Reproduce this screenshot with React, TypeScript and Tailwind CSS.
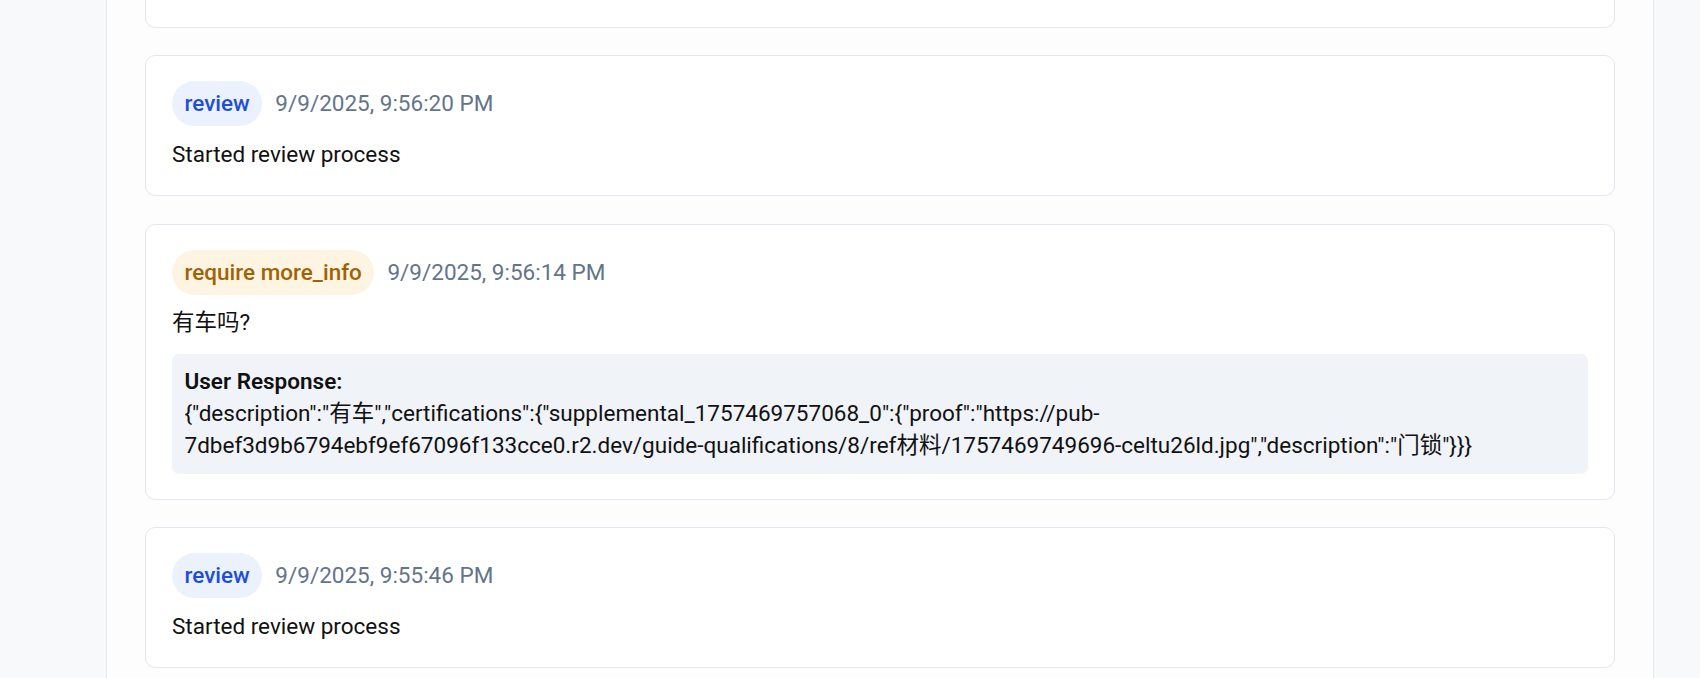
import React from 'react';

type Entry = {
    action: string;
    tone: 'blue' | 'amber';
    time: string;
    note: string;
    response?: string;
};

const entries: Entry[] = [
    { action: 'review', tone: 'blue', time: '9/9/2025, 9:56:31 PM', note: 'Started review process' },
    { action: 'review', tone: 'blue', time: '9/9/2025, 9:56:20 PM', note: 'Started review process' },
    {
        action: 'require more_info',
        tone: 'amber',
        time: '9/9/2025, 9:56:14 PM',
        note: '有车吗?',
        response:
            '{"description":"有车","certifications":{"supplemental_1757469757068_0":{"proof":"https://pub-7dbef3d9b6794ebf9ef67096f133cce0.r2.dev/guide-qualifications/8/ref材料/1757469749696-celtu26ld.jpg","description":"门锁"}}}',
    },
    { action: 'review', tone: 'blue', time: '9/9/2025, 9:55:46 PM', note: 'Started review process' },
    { action: 'submit', tone: 'blue', time: '9/9/2025, 9:55:40 PM', note: 'Application submitted' },
];

const badgeTone = {
    blue: 'bg-[#ebf1fd] text-[#1d4ed8]',
    amber: 'bg-[#fdf5e2] text-[#a16207]',
};

const HistoryCard: React.FC<{ entry: Entry }> = ({ entry }) => {
    return (
        <div className="rounded-[10px] border border-[#e2e8f0] bg-white px-[26px] pt-[25px] pb-[25px]">
            {/* Action + time */}
            <div className="flex items-center gap-[13px] mb-[12.5px]">
                <span className={`inline-flex items-center rounded-full px-[12.5px] py-[5px] leading-[34.7px] font-medium ${badgeTone[entry.tone]}`}>
                    {entry.action}
                </span>
                <span className="text-[#64748b] leading-[34.7px]">{entry.time}</span>
            </div>

            <p className="leading-[31.7px]">{entry.note}</p>

            {entry.response && (
                <div className="mt-[15px] rounded-[7px] bg-[#f0f3f8] p-[12.5px] leading-[31.7px]">
                    <div className="font-semibold">User Response:</div>
                    <div>{entry.response}</div>
                </div>
            )}
        </div>
    );
};

export default function App() {
    return (
        <div className="min-h-screen overflow-hidden bg-[#f8f9fb] font-[Roboto,'Noto_Sans_CJK_SC',sans-serif] text-[22.5px] text-[#111]">
            <div className="ml-[106px] flex min-h-screen w-[1548px] flex-col border-x border-[#e5e9f0] bg-[#fdfdfd] px-[38px]">
                {/* list is scrolled: first card only shows its bottom edge */}
                <div className="-mt-[113px] flex flex-col gap-[27.5px]">
                    {entries.map((entry, i) => (
                        <HistoryCard key={i} entry={entry} />
                    ))}
                </div>
            </div>
        </div>
    );
}
